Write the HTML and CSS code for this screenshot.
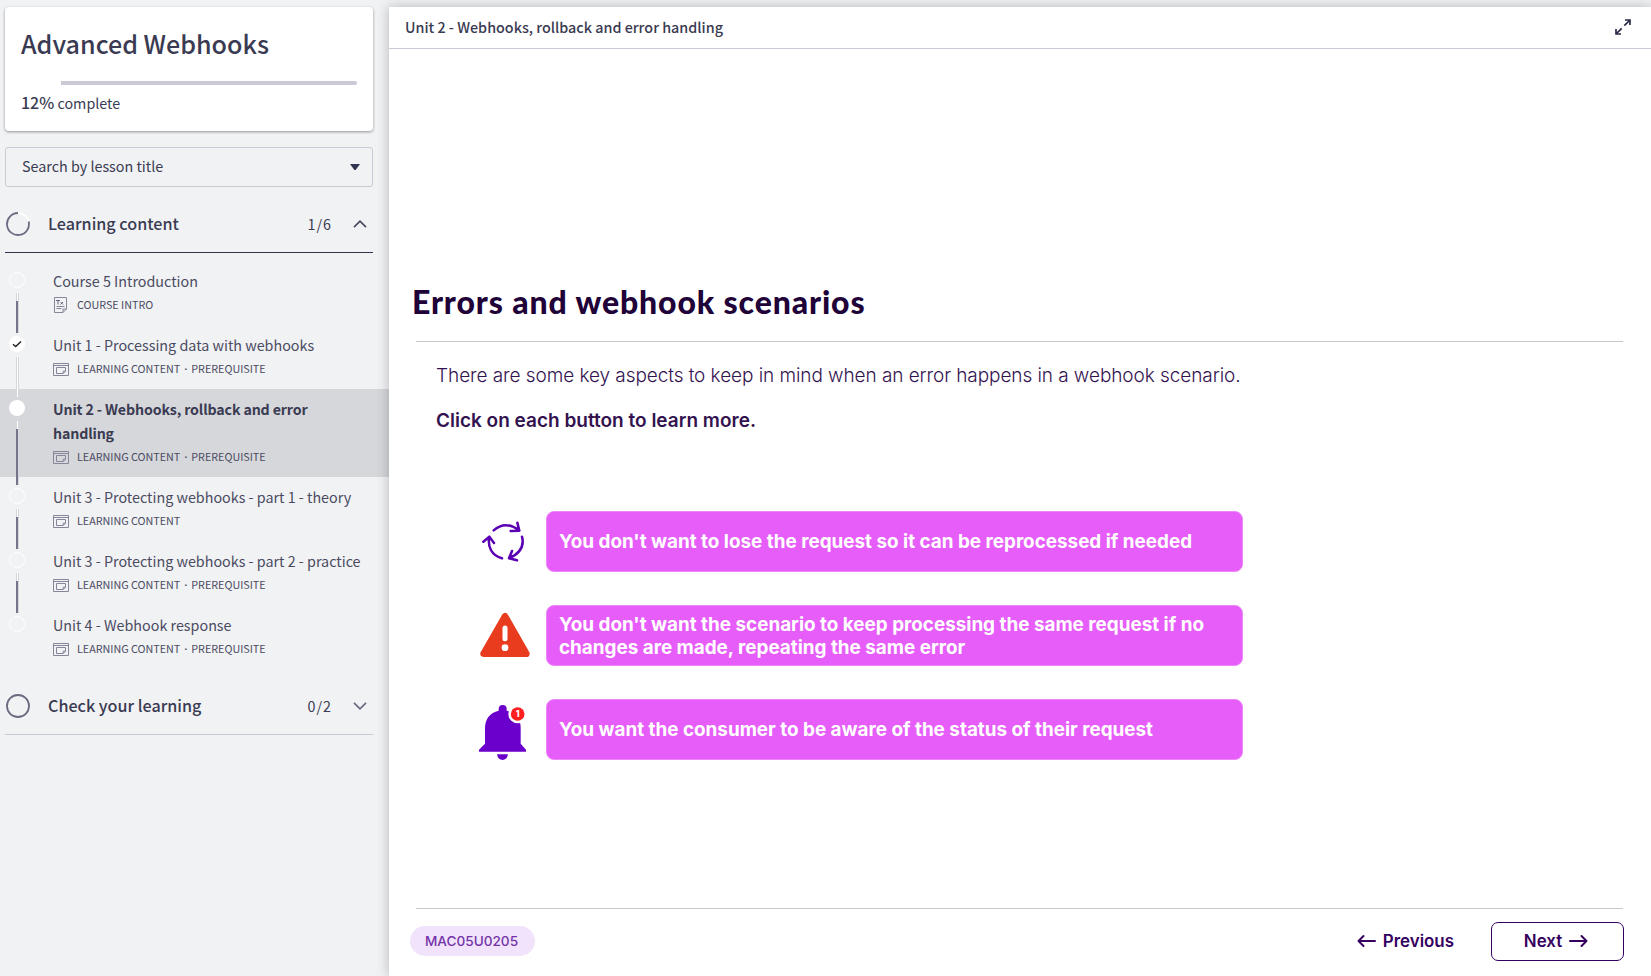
FILE: index.html
```html
<!DOCTYPE html>
<html lang="en">
<head>
<meta charset="utf-8">
<title>Advanced Webhooks</title>
<link rel="stylesheet" href="styles.css">
</head>
<body>
<svg class="defs" width="0" height="0">
  <symbol id="lesson" viewBox="0 0 16 13"><path d="M.5.5h15v12H.5zM.5 2.5h15M3.5 4.5h9v3.7l-2.3 2.3H3.500zM12.500 8.200h-2.300v2.300" fill="none" stroke="currentColor"/></symbol>
</svg>
<div class="app">
  <aside class="sidebar">
    <section class="card">
      <h1 class="course">Advanced Webhooks</h1>
      <div class="progress"><div class="progress-done" style="width:12%"></div></div>
      <p class="complete"><b>12%</b> complete</p>
    </section>
    <div class="search"><span>Search by lesson title</span><svg width="10" height="7" viewBox="0 0 10 7"><path d="M0 0h10L6 5.500Q5 6.500 4 5.500z" fill="#33344f"/></svg></div>
    <div class="section open">
      <svg class="ring" width="24" height="24" viewBox="0 0 24 24"><circle cx="12" cy="12" r="11" fill="none" stroke="#fff" stroke-width="1.600"/><path d="M22.700 9.500A11 11 0 1 1 12 1" fill="none" stroke="#6a6b80" stroke-width="1.800"/></svg>
      <h2>Learning content</h2><span class="count">1/6</span>
      <svg class="chev" width="14" height="8" viewBox="0 0 14 8"><path d="M1 7.200L7 1.200l6 6" fill="none" stroke="#4a4b60" stroke-width="1.700"/></svg>
    </div>
    <ul class="lessons">
      <li class="lesson"><i class="dot"></i><i class="line"></i><p class="title">Course 5 Introduction</p>
        <p class="meta"><svg class="doc" width="16" height="16" viewBox="0 0 16 16" fill="none" stroke="#85869a"><path d="M1.500.5h12v11.500l-3.500 3.500H1.500zM13.500 12H10v3.500M3.500 9.500h8M3.500 11.500h5"/><path d="M3 3.500h4M5 3.500v4M7.500 5l2.500 2.500M10 5L7.500 7.500" stroke="#666780"/></svg><span>COURSE INTRO</span></p></li>
      <li class="lesson"><i class="dot full"><svg width="16" height="16" viewBox="0 0 16 16"><path d="M4 8.300l2.700 2.300L12 5.500" fill="none" stroke="#222" stroke-width="1.500"/></svg></i><i class="line done"></i><p class="title">Unit 1 - Processing data with webhooks</p>
        <p class="meta"><svg width="16" height="13"><use href="#lesson"/></svg><span>LEARNING CONTENT</span><span class="sep">·</span><span>PREREQUISITE</span></p></li>
      <li class="lesson current"><i class="dot full"></i><i class="line"></i><p class="title">Unit 2 - Webhooks, rollback and error<br>handling</p>
        <p class="meta"><svg width="16" height="13"><use href="#lesson"/></svg><span>LEARNING CONTENT</span><span class="sep">·</span><span>PREREQUISITE</span></p></li>
      <li class="lesson"><i class="dot"></i><i class="line"></i><p class="title">Unit 3 - Protecting webhooks - part 1 - theory</p>
        <p class="meta"><svg width="16" height="13"><use href="#lesson"/></svg><span>LEARNING CONTENT</span></p></li>
      <li class="lesson"><i class="dot"></i><i class="line"></i><p class="title">Unit 3 - Protecting webhooks - part 2 - practice</p>
        <p class="meta"><svg width="16" height="13"><use href="#lesson"/></svg><span>LEARNING CONTENT</span><span class="sep">·</span><span>PREREQUISITE</span></p></li>
      <li class="lesson"><i class="dot"></i><p class="title">Unit 4 - Webhook response</p>
        <p class="meta"><svg width="16" height="13"><use href="#lesson"/></svg><span>LEARNING CONTENT</span><span class="sep">·</span><span>PREREQUISITE</span></p></li>
    </ul>
    <div class="section">
      <svg class="ring" width="24" height="24" viewBox="0 0 24 24"><circle cx="12" cy="12" r="11" fill="none" stroke="#6a6b80" stroke-width="1.800"/></svg>
      <h2>Check your learning</h2><span class="count">0/2</span>
      <svg class="chev" width="14" height="8" viewBox="0 0 14 8"><path d="M1 .8l6 6 6-6" fill="none" stroke="#6a6b80" stroke-width="1.700"/></svg>
    </div>
  </aside>
  <main class="player">
    <header class="bar"><span>Unit 2 - Webhooks, rollback and error handling</span>
      <svg width="16" height="16" viewBox="0 0 16 16" fill="none" stroke="#2b2c48" stroke-width="1.700"><path d="M10 1H15v5M15 1L9.300 6.700M6 15H1V10M1 15l5.700-5.700"/></svg></header>
    <article class="slide">
      <h2 class="headline">Errors and webhook scenarios</h2>
      <p class="intro">There are some key aspects to keep in mind when an error happens in a webhook scenario.</p>
      <p class="hint">Click on each button to learn more.</p>
      <div class="points">
        <div class="point">
          <svg width="50" height="60" viewBox="52 33 150 180" fill="none" stroke="#5a00b4" stroke-width="7.500" stroke-linecap="round" stroke-linejoin="round"><path d="M99 91Q134 60 175 91M170 68l6 24-26 1M184 110C191 137 178 160 147 174M154 153l-9 22 24 6M124 175C93 167 80 140 86 110M68 125l18-15 14 19"/></svg>
          <button>You don't want to lose the request so it can be reprocessed if needed</button></div>
        <div class="point">
          <svg width="50" height="60" viewBox="54 315 150 180"><path d="M135 349L71 461H199z" fill="#e93c1e" stroke="#e93c1e" stroke-width="20" stroke-linejoin="round"/><path d="M135 384v32" stroke="#fff" stroke-width="15" stroke-linecap="round"/><circle cx="135" cy="443" r="10" fill="#fff"/></svg>
          <button>You don't want the scenario to keep processing the same request if no<br>changes are made, repeating the same error</button></div>
        <div class="point">
          <svg width="50" height="60" viewBox="54 597 150 180"><path d="M116 632v-5a12 12 0 0 1 24 0v5Q182 642 182 684v47l16 18v6H57v-6l18-18v-47Q76 642 116 632zM111 763h33q-3 17-16.500 17T111 763z" fill="#6b00cc"/><circle cx="173" cy="642" r="28" fill="#fff"/><circle cx="173" cy="642" r="20.500" fill="#ff1f1f"/><text class="one" x="173" y="652" text-anchor="middle">1</text></svg>
          <button>You want the consumer to be aware of the status of their request</button></div>
      </div>
      <footer class="foot">
        <span class="badge">MAC05U0205</span>
        <a class="prev"><svg width="19" height="14" viewBox="0 0 19 14"><path d="M18 7H1.500M6.500 2L1.500 7l5 5"/></svg>Previous</a>
        <a class="next">Next<svg width="19" height="14" viewBox="0 0 19 14"><path d="M1 7h16.500M12.500 2l5 5-5 5"/></svg></a>
      </footer>
    </article>
  </main>
</div>
</body>
</html>
```
FILE: styles.css
```css
* { box-sizing: border-box; }
body { margin: 0; background: #f1f2f4; color: #3a3b52; font: 14.33px/24px "Noto Sans CJK SC", sans-serif; }
h1, h2, p, ul { margin: 0; padding: 0; }
.defs { position: absolute; }
.app { display: flex; width: 1651px; height: 976px; overflow: hidden; }
.sidebar { width: 389px; flex: none; padding-top: 7px; }
.card { width: 368px; height: 124px; margin-left: 5px; padding: 18px 16px 0; background: #fff; border-radius: 4px; box-shadow: 0 1px 3px rgba(0,0,0,.4); }
.course { font-size: 25.1px; line-height: 36px; font-weight: 500; }
.progress { height: 4px; margin: 20px 0 5px; background: #c9cad6; border-radius: 2px; }
.progress-done { height: 4px; background: #fff; }
.complete b { font-weight: 500; font-size: 16px; }
.search { display: flex; align-items: center; justify-content: space-between; width: 368px; height: 40px; margin: 16px 0 0 5px; padding: 0 12px 0 16px; border: 1px solid #c9cad6; border-radius: 3px; }
.search span { margin-bottom: 2px; }
.section { display: flex; align-items: center; width: 368px; height: 57px; margin-left: 5px; padding: 0 6px 0 1px; border-bottom: 1px solid #c9cad6; }
.section.open { height: 58px; margin-top: 8px; margin-bottom: 8px; border-color: #33344f; }
.section h2 { margin: 0 0 2px 18px; font-size: 16.15px; font-weight: 500; }
.count { margin-left: auto; margin-right: 21px; letter-spacing: 1px; }
.lessons { list-style: none; margin-bottom: 9px; }
.lesson { position: relative; padding: 8px 0 8px 53px; color: #4a4b62; }
.title { white-space: nowrap; }
.current { background: #d6d7db; }
.current .title { font-weight: 700; font-size: 14.2px; letter-spacing: -.14px; color: #3a3b52; }
.dot { position: absolute; left: 9px; top: 11px; width: 16px; height: 16px; border-radius: 50%; border: 1px solid #fff; }
.dot.full { background: #fff; border: 0; }
.dot svg { display: block; }
.line { position: absolute; z-index: 1; left: 16px; top: 32px; bottom: -8px; width: 3px; border: solid #d6d7db; border-width: 0 1px; background: linear-gradient(#fff 8px, #74758a 8px); }
.line::after { content: ""; position: absolute; left: -1px; top: 8px; bottom: 0; width: 2px; background: #74758a; }
.line.done { background: #fff; }
.line.done::after { display: none; }
.meta { display: flex; align-items: center; height: 24px; font-size: 10.75px; }
.meta svg { width: 16px; margin-right: 8px; color: #85869a; }
.sep { width: 11px; padding-top: 2px; line-height: 22px; text-align: center; font-family: Roboto, sans-serif; font-weight: 700; }
.player { position: relative; flex: 1; margin-top: 7px; background: #fff; box-shadow: 0 0 12px rgba(0,0,0,.25); }
.bar { display: flex; align-items: center; justify-content: space-between; height: 42px; padding: 0 20px 2px 16px; border-bottom: 1px solid #c9cad6; font-weight: 500; }
.slide { display: flex; flex-direction: column; height: 927px; padding: 229px 28px 0 27px; font-family: Inter, sans-serif; color: #33134f; }
.headline { height: 63px; margin-left: -4px; font: 900 32px/48px Lato, sans-serif; letter-spacing: .87px; color: #200238; white-space: nowrap; }
.intro { border-top: 1px solid #ccc6ca; height: 68px; padding: 22px 0 0 20px; font-size: 19px; font-weight: 350; letter-spacing: -.07px; white-space: nowrap; }
.hint { padding-left: 20px; font-size: 19px; font-weight: 600; }
.points { display: flex; flex-direction: column; gap: 33px; margin: 78px 0 0 62px; }
.point { display: flex; gap: 18px; }
.point svg { overflow: visible; }
.point button { width: 697px; height: 61px; padding: 0 12px; border: 1px solid #ee86fa; border-radius: 8px; background: #e65df9; color: #fff; font: 700 18.870px/23px Inter, sans-serif; text-align: left; white-space: nowrap; }
.one { font: 800 26px Inter, sans-serif; fill: #fff; }
.foot { display: flex; align-items: center; height: 65px; margin-top: 148px; border-top: 1px solid #ccc6ca; color: #35005f; font-size: 16.9px; font-weight: 600; }
.foot svg { fill: none; stroke: #35005f; stroke-width: 2; stroke-linecap: round; stroke-linejoin: round; }
.badge { height: 30px; width: 125px; margin-left: -6px; padding-right: 2px; border-radius: 15px; background: #f0e3fb; color: #7434a8; font-size: 13.6px; font-weight: 500; line-height: 30px; text-align: center; }
.prev { display: flex; align-items: center; gap: 7px; margin-left: auto; margin-right: 37px; }
.next { display: flex; align-items: center; justify-content: center; gap: 7px; width: 133px; height: 39px; margin-right: -1px; padding-right: 3px; border: 1px solid #35005f; border-radius: 7px; }
```
